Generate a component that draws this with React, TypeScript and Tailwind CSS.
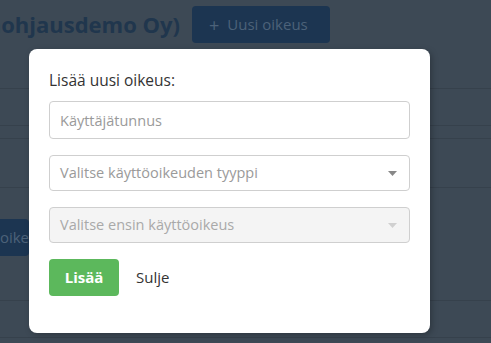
/** Access rights page with the "add new right" modal open over a dimmed backdrop. */
import { useState } from "react";

const font = { fontFamily: '"Open Sans", "Noto Sans", sans-serif' };

function Caret({ disabled }: { disabled?: boolean }) {
  return (
    <svg width="9" height="5" viewBox="0 0 9 5" className="shrink-0">
      <path d="M0 0h9L4.5 5z" fill={disabled ? "#d0d0d0" : "#888888"} />
    </svg>
  );
}

function SelectBox({ placeholder, disabled }: { placeholder: string; disabled?: boolean }) {
  return (
    <div
      className={`flex h-[36px] items-center justify-between rounded-[4px] border border-[#cfcfcf] pl-[10px] pr-[12px] text-[14.5px] ${
        disabled ? "bg-[#f4f4f4] text-[#a9a9a9]" : "bg-white text-[#9a9a9a]"
      }`}
    >
      <span>{placeholder}</span>
      <Caret disabled={disabled} />
    </div>
  );
}

export default function App() {
  const [user, setUser] = useState("");

  return (
    <div className="relative h-[343px] w-[491px] overflow-hidden bg-[#3d4955]" style={font}>
      {/* dimmed page behind the modal */}
      <div className="flex h-[49px] items-start gap-[12px] pt-[6px]">
        <div className="flex w-[180px] justify-end overflow-hidden whitespace-nowrap pt-[3px] text-[22px] font-bold leading-[30px] text-[#20364d]">
          Käyttöoikeudet (Etäohjausdemo Oy)
        </div>
        <div className="flex h-[37px] w-[138px] items-center gap-[8px] rounded-[4px] bg-[#1c3551] pl-[17px] text-[15px] text-[#4c6279]">
          <span className="text-[18px] leading-none">+</span>
          <span>Uusi oikeus</span>
        </div>
      </div>
      <div className="h-[40px] border-b border-[#36414c]" />
      <div className="h-[37px] border-b border-[#36414c]" />
      <div className="h-[13px] border-b border-[#36414c]" />
      <div className="h-[49px] border-b border-[#36414c]" />
      <div className="h-[113px] border-b border-[#36414c] pt-[31px]">
        <div className="flex h-[37px] w-[29px] items-center justify-end overflow-hidden rounded-r-[4px] bg-[#1c3551] text-[15px] text-[#4c6279]">
          <span className="whitespace-nowrap">oike</span>
        </div>
      </div>
      <div className="h-[37px] border-b border-[#36414c]" />

      {/* modal */}
      <div className="absolute left-[29px] top-[49px] w-[401px] rounded-[8px] bg-white px-[20px] pb-[37px] pt-[20px] shadow-[2px_2px_6px_rgba(0,0,0,0.25)]">
        <div className="mb-[10px] text-[15.5px] leading-[22px] text-[#333333]">Lisää uusi oikeus:</div>
        <input
          className="mb-[16px] block h-[38px] w-full rounded-[4px] border border-[#cfcfcf] px-[10px] text-[14.5px] text-[#333] placeholder:text-[#9a9a9a] focus:outline-none"
          placeholder="Käyttäjätunnus"
          value={user}
          onChange={(e) => setUser(e.target.value)}
        />
        <div className="mb-[16px]">
          <SelectBox placeholder="Valitse käyttöoikeuden tyyppi" />
        </div>
        <div className="mb-[16px]">
          <SelectBox placeholder="Valitse ensin käyttöoikeus" disabled />
        </div>
        <div className="flex items-center gap-[17px]">
          <button className="h-[37px] w-[70px] rounded-[4px] bg-[#5cb85c] text-[15px] font-bold text-white">Lisää</button>
          <button className="text-[15px] text-[#333333]">Sulje</button>
        </div>
      </div>
    </div>
  );
}
